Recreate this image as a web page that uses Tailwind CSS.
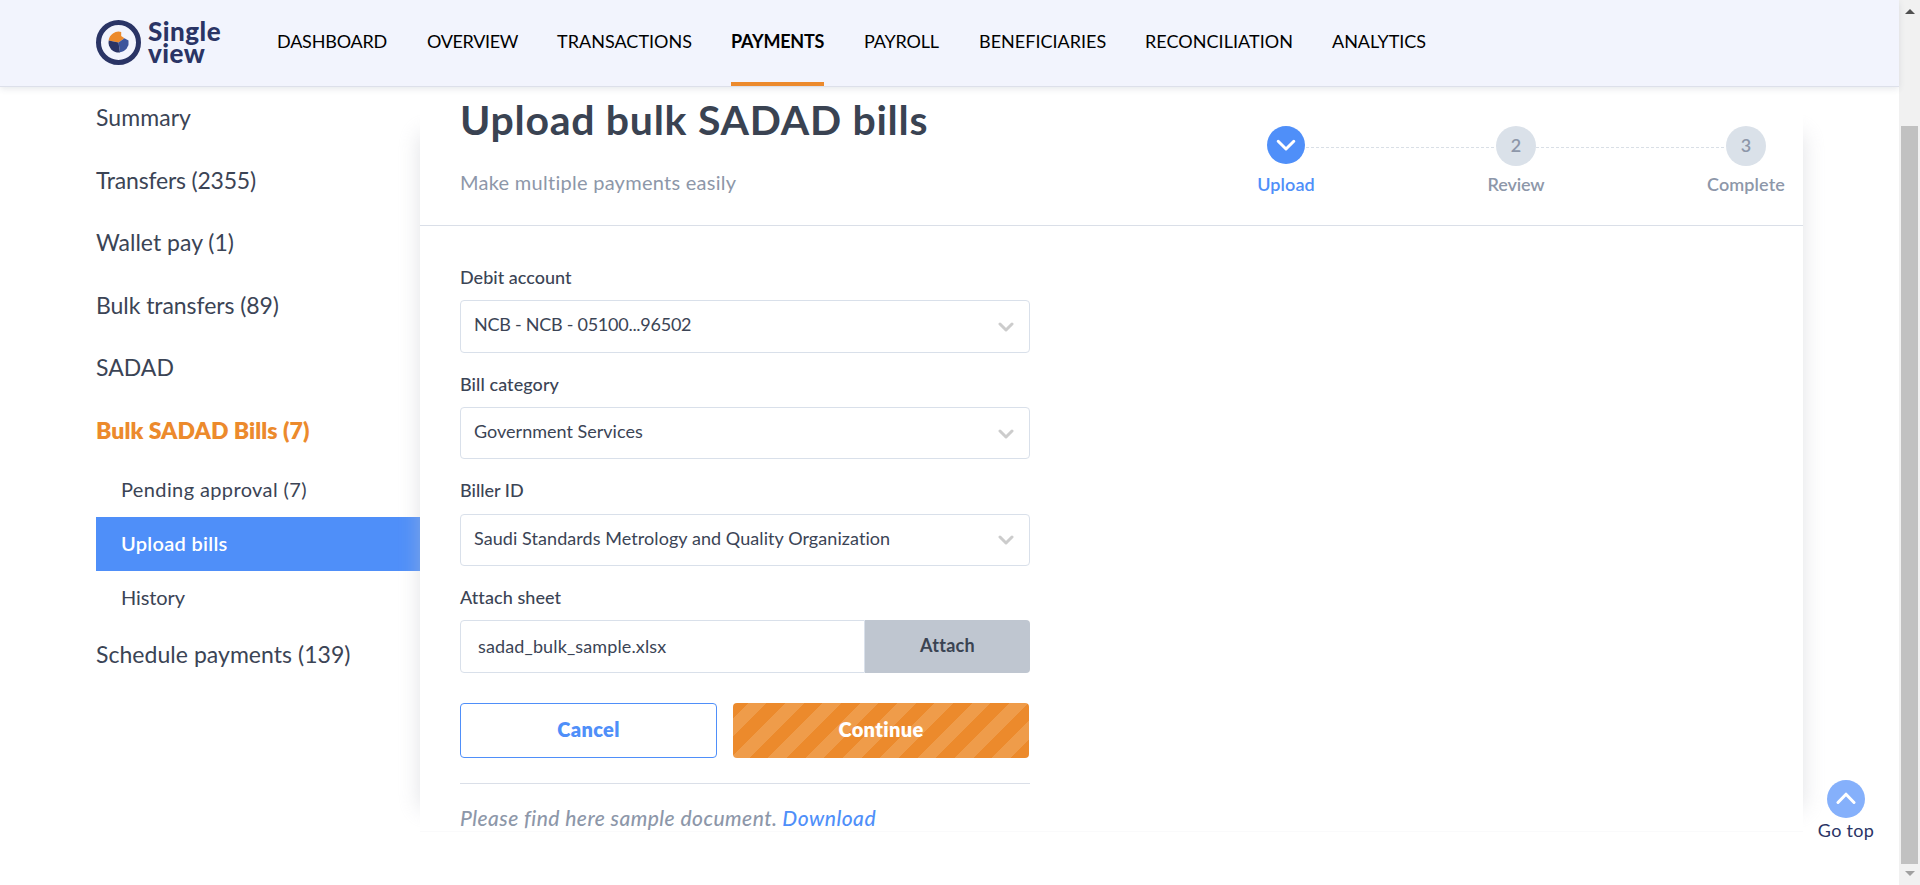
<!DOCTYPE html>
<html lang="en">
<head>
<meta charset="utf-8">
<title>Single view – Upload bulk SADAD bills</title>
<script src="https://cdn.jsdelivr.net/npm/@tailwindcss/browser@4"></script>
</head>
<body class="relative h-[885px] w-[1920px] overflow-hidden bg-white font-[Lato,'Liberation_Sans',sans-serif] text-[#3b4455]">
<div class="flex h-full">
  <div class="flex h-full w-[1899px] flex-col">

    <header class="relative z-10 flex h-[87px] shrink-0 border-b border-[#dde0ea] bg-[#f2f4fd] pl-24 shadow-[0_2px_6px_rgba(60,70,100,0.12)]">
      <a class="flex w-[181px] gap-[7px] pt-5 text-[#2a3465]">
        <svg class="size-[45px] shrink-0" viewBox="0 0 45 45">
          <circle cx="22.5" cy="22.5" r="20" fill="none" stroke="#2a3465" stroke-width="5"/>
          <path d="M22.5 22.5 L12.6 20.6 A10 10 0 0 1 25.2 12 L25.2 16 L28.5 18.2 Z" fill="#ec8a2c"/>
          <path d="M22.5 22.5 L28.5 18.2 L32.5 20.5 A10 10 0 0 1 24 32.3 Z" fill="#3d559b"/>
          <path d="M22.5 22.5 L24 32.4 A10 10 0 0 1 12.7 20.6 Z" fill="#2a3465"/>
        </svg>
        <span class="mt-px block text-[26px] leading-[21.5px] font-black tracking-[0.5px]">Single<br>view</span>
      </a>
      <nav class="flex h-[86px] gap-10 text-[18px] leading-[82px] text-black">
        <a class="w-[110px] tracking-[-0.2px]">DASHBOARD</a>
        <a class="w-[90px] tracking-[-0.35px]">OVERVIEW</a>
        <a class="w-[134px] tracking-[0.02px]">TRANSACTIONS</a>
        <a class="w-[93px] border-b-4 border-[#ec8a2c] font-bold tracking-[-0.22px]">PAYMENTS</a>
        <a class="w-[75px] tracking-[-0.2px]">PAYROLL</a>
        <a class="w-[126px] tracking-[0.01px]">BENEFICIARIES</a>
        <a class="w-[147px] tracking-[0.04px]">RECONCILIATION</a>
        <a class="w-[94px] tracking-[-0.05px]">ANALYTICS</a>
      </nav>
    </header>

    <div class="flex flex-1">
      <aside class="-mt-px w-[420px] shrink-0 pl-24 text-[23px] leading-[62.5px] whitespace-nowrap">
        <a class="block tracking-[0.06px]">Summary</a>
        <a class="block tracking-[-0.2px]">Transfers (2355)</a>
        <a class="block tracking-[0.01px]">Wallet pay (1)</a>
        <a class="block tracking-[-0.06px]">Bulk transfers (89)</a>
        <a class="block tracking-[0.01px]">SADAD</a>
        <a class="block font-extrabold tracking-[0.05px] text-[#ec8a2c]">Bulk SADAD Bills (7)</a>
        <div class="text-[20px] leading-[54px]">
          <a class="block h-14 pt-[2px] pl-[25px] leading-[53px] tracking-[0.38px]">Pending approval (7)</a>
          <a class="block h-[54px] bg-[#4f8ff9] pl-[25px] leading-[53px] font-semibold tracking-[0.3px] text-white">Upload bills</a>
          <a class="block pl-[25px] leading-[53px] tracking-[-0.09px]">History</a>
        </div>
        <a class="block leading-[61px] tracking-[0.04px]">Schedule payments (139)</a>
      </aside>

      <main class="relative mt-[23px] h-[722px] w-[1383px] border-b border-[#fafafb] bg-white shadow-[-24px_0_20px_-24px_rgba(192,195,202,0.48),24px_0_20px_-24px_rgba(192,195,202,0.48)]">
        <div class="-mt-[23px] flex h-[139px] justify-between border-b border-[#dadfe8] pr-[17px] pl-10">
          <div class="pt-[10px]">
            <h1 class="text-[41px] leading-[46px] font-bold tracking-[0.72px] text-[#3a4352]">Upload bulk SADAD bills</h1>
            <p class="mt-[27px] text-[20px] leading-6 tracking-[0.27px] text-[#8d97a9]">Make multiple payments easily</p>
          </div>
          <div class="mt-[39px] grid h-[80px] w-[540px] grid-cols-[80px_150px_80px_150px_80px] items-start text-center text-[18px] font-semibold text-[#8d97a9]">
            <div class="flex flex-col items-center">
              <span class="flex size-[38px] items-center justify-center rounded-full bg-[#4f8ff9]">
                <svg class="size-5" viewBox="0 0 20 20" fill="none" stroke="#fff" stroke-width="3" stroke-linecap="round" stroke-linejoin="round"><path d="M2.2 6.3 L10 14 L17.8 6.3"/></svg>
              </span>
              <span class="mt-2 leading-6 font-semibold tracking-[0.1px] text-[#4f8ff9]">Upload</span>
            </div>
            <svg class="mt-[21px] -ml-5 h-px w-[190px]" viewBox="0 0 190 1"><path d="M0 .5H190" stroke="#d9dfe6" stroke-dasharray="3 2"/></svg>
            <div class="flex flex-col items-center">
              <span class="size-10 rounded-full bg-[#dae1e9] leading-[38px]">2</span>
              <span class="mt-[6px] leading-6 tracking-[-0.13px]">Review</span>
            </div>
            <svg class="mt-[21px] -ml-5 h-px w-[190px]" viewBox="0 0 190 1"><path d="M0 .5H190" stroke="#d9dfe6" stroke-dasharray="3 2"/></svg>
            <div class="flex flex-col items-center">
              <span class="size-10 rounded-full bg-[#dae1e9] leading-[38px]">3</span>
              <span class="mt-[6px] leading-6 tracking-[0.1px]">Complete</span>
            </div>
          </div>
        </div>

        <form class="ml-10 w-[570px] pt-[39px] text-[18px] whitespace-nowrap">
          <label class="block h-[35px] leading-6 font-medium tracking-[0.02px]">Debit account</label>
          <div class="flex h-[53px] items-center justify-between rounded-[4px] border border-[#d9e0ea] pr-[15px] pl-[13px]">
            <span class="-mt-[4px] tracking-[-0.26px]">NCB - NCB - 05100...96502</span>
            <svg class="h-[10px] w-4" viewBox="0 0 16 10" fill="none" stroke="#ccc" stroke-width="3" stroke-linecap="round" stroke-linejoin="round"><path d="M2 2 L8 8 L14 2"/></svg>
          </div>
          <label class="mt-[19px] block h-[35px] leading-6 font-medium tracking-[0.08px]">Bill category</label>
          <div class="flex h-[52px] items-center justify-between rounded-[4px] border border-[#d9e0ea] pr-[15px] pl-[13px]">
            <span class="-mt-[3px] tracking-[0.01px]">Government Services</span>
            <svg class="mt-px h-[10px] w-4" viewBox="0 0 16 10" fill="none" stroke="#ccc" stroke-width="3" stroke-linecap="round" stroke-linejoin="round"><path d="M2 2 L8 8 L14 2"/></svg>
          </div>
          <label class="mt-[19px] block h-9 leading-6 font-medium tracking-[0.01px]">Biller ID</label>
          <div class="flex h-[52px] items-center justify-between rounded-[4px] border border-[#d9e0ea] pr-[15px] pl-[13px]">
            <span class="-mt-[3px] tracking-[0.07px]">Saudi Standards Metrology and Quality Organization</span>
            <svg class="h-[10px] w-4" viewBox="0 0 16 10" fill="none" stroke="#ccc" stroke-width="3" stroke-linecap="round" stroke-linejoin="round"><path d="M2 2 L8 8 L14 2"/></svg>
          </div>
          <label class="mt-[19px] block h-[35px] leading-6 font-medium tracking-[0.06px]">Attach sheet</label>
          <div class="flex h-[53px]">
            <span class="w-[405px] rounded-l-[4px] border border-[#d9e0ea] pl-[17px] leading-[51px] tracking-[0.13px]">sadad_bulk_sample.xlsx</span>
            <span class="flex-1 rounded-r-[4px] bg-[#bfc6d0] text-center leading-[51px] font-bold tracking-[0.3px] text-[#3a4352]">Attach</span>
          </div>
          <div class="mt-[30px] flex h-[55px] gap-4 text-center text-[20px] font-extrabold tracking-[0.35px]">
            <span class="w-[257px] rounded-[4px] border border-[#4f8ff9] leading-[50px] text-[#4f8ff9]">Cancel</span>
            <span class="w-[296px] rounded-[4px] bg-[repeating-linear-gradient(135deg,#ec8a2c_0,#ec8a2c_10.8px,#ef9c4a_10.8px,#ef9c4a_24px,#ec8a2c_24px,#ec8a2c_26.4px)] leading-[52px] text-white">Continue</span>
          </div>
          <p class="mt-[25px] border-t border-[#dadfe8] pt-[22px] text-[21px] leading-6 font-medium text-[#8d97a9] italic"><span class="tracking-[0.46px]">Please find here sample document.</span> <a class="tracking-[0.5px] text-[#4f8ff9]">Download</a></p>
        </form>
      </main>
    </div>
  </div>

  <div class="flex h-full w-[21px] flex-col items-center bg-[#f1f1f1]">
    <svg class="mt-[9px] h-[5px] w-[10px]" viewBox="0 0 10 5"><path d="M5 0 L10 5 H0 Z" fill="#505050"/></svg>
    <div class="mt-[112px] h-[738px] w-[17px] bg-[#c1c1c1]"></div>
    <svg class="mt-[7px] h-[5px] w-[10px]" viewBox="0 0 10 5"><path d="M0 0 H10 L5 5 Z" fill="#a0a0a0"/></svg>
  </div>
</div>

<a class="absolute top-[780px] left-[1806px] flex w-20 flex-col items-center text-[18px] tracking-[0.3px] text-[#2a3465]">
  <span class="flex size-[38px] items-center justify-center rounded-full bg-[#85b0fb]">
    <svg class="size-5" viewBox="0 0 20 20" fill="none" stroke="#fff" stroke-width="3" stroke-linecap="round" stroke-linejoin="round"><path d="M2 13.5 L10 5.2 L18 13.5"/></svg>
  </span>
  <span class="leading-6">Go top</span>
</a>
</body>
</html>
